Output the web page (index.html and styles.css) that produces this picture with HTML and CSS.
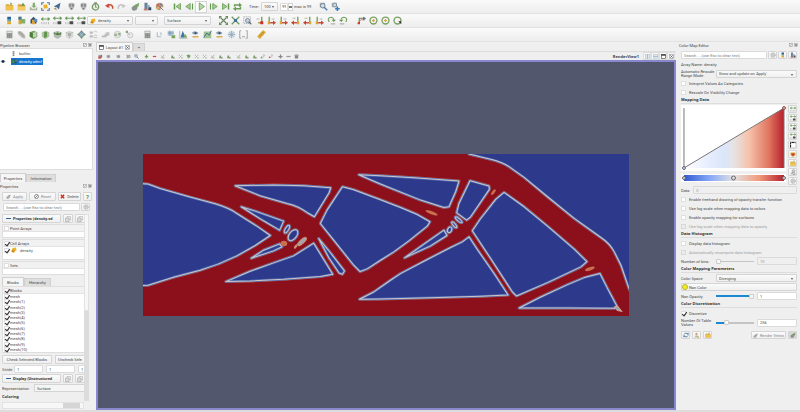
FILE: index.html
```html
<!DOCTYPE html>
<html lang="en">
<head>
<meta charset="utf-8">
<title>ParaView</title>
<link rel="stylesheet" href="styles.css">
</head>
<body>
<svg class="sprite" aria-hidden="true">
  <defs>
    <linearGradient id="cool-warm"><stop offset="0" stop-color="#3458cf"/><stop offset=".25" stop-color="#83a6f6"/><stop offset=".5" stop-color="#e3e2e2"/><stop offset=".75" stop-color="#f29a7c"/><stop offset="1" stop-color="#b5202b"/></linearGradient>
    <linearGradient id="opacity-fill"><stop offset="0" stop-color="#fff"/><stop offset=".2" stop-color="#eaf0fd"/><stop offset=".4" stop-color="#dbe6fb"/><stop offset=".5" stop-color="#e6e2e3"/><stop offset=".65" stop-color="#f6c2ab"/><stop offset=".85" stop-color="#e0755f"/><stop offset="1" stop-color="#b5202b"/></linearGradient>
  </defs>
  <symbol id="folder" viewBox="0 0 12 12"><path d="M1 3h4l1 1h5v7H1z" fill="#dba63a"/><path d="M1 5h10v6H1z" fill="#f0c24d"/><path d="M7 4V1h2v3" fill="#86a468"/></symbol>
  <symbol id="folder-up" viewBox="0 0 12 12"><path d="M1 3h4l1 1h5v7H1z" fill="#dba63a"/><path d="M1 6h10v5H1z" fill="#f2cc62"/><path d="M5 5l3-4 3 4z" fill="#6b9a58"/></symbol>
  <symbol id="save" viewBox="0 0 12 12"><path d="M5 1h3v4h2L6.500 8 3 5h2z" fill="#84ad70"/><path d="M1 7h2l1 2h5l1-2h1v4H1z" fill="#a7b69c"/></symbol>
  <symbol id="extract" viewBox="0 0 12 12"><path d="M3 4l5-1 1 5-5 1z" fill="#efb222"/><path d="M1 4V1h3M8 1h3v3M1 8v3h3M8 11h3V8" fill="none" stroke="#52779c" stroke-width="1.500"/></symbol>
  <symbol id="catalyst" viewBox="0 0 12 12"><path d="M1 6l9-5-2 9-3-3z" fill="#456b91"/><path d="M1 9l3-2 1 4z" fill="#b98b5e"/></symbol>
  <symbol id="server" viewBox="0 0 12 12"><path d="M2 2q4-2 8 0v4q-1 3-4 5-3-2-4-5z" fill="#b8b8b8"/><path d="M3 3h2v3H3zM7 3h2v3H7zM5 8h2v2H5z" fill="#767676"/></symbol>
  <symbol id="clock" viewBox="0 0 12 12"><circle cx="6" cy="6.500" r="4.200" fill="#e5eedf" stroke="#739663" stroke-width="1.700"/><path d="M6 3v4h2M4 1h4" fill="none" stroke="#64785a"/></symbol>
  <symbol id="undo" viewBox="0 0 12 12"><path d="M3 7q1-4 5-3 3 1 2 5" fill="none" stroke="#c94d35" stroke-width="2"/><path d="M0 5l5-3 1 6z" fill="#c94d35"/></symbol>
  <symbol id="redo" viewBox="0 0 12 12"><path d="M9 7Q8 3 4 4 1 5 2 9" fill="none" stroke="#c3c3c3" stroke-width="2"/><path d="M12 5L7 3v5z" fill="#c3c3c3"/></symbol>
  <symbol id="apply" viewBox="0 0 12 12"><path d="M1 7l4-3 4 2-1 4-4 2-3-2z" fill="#8a938b"/><path d="M5 4l6-3-1 5-3 1z" fill="#76a55f"/></symbol>
  <symbol id="apply-off" viewBox="0 0 12 12"><path d="M1 7l4-3 4 2-1 4-4 2-3-2z" fill="#aaa"/><path d="M5 4l6-3-1 5-3 1z" fill="#999"/></symbol>
  <symbol id="stack" viewBox="0 0 12 12"><path d="M2 1h4v10H2z" fill="#60809d"/><path d="M5 4h4v3H5z" fill="#9cadbd"/><path d="M7 7h4v4H7z" fill="#354b61"/><path d="M1 9h5v2H1z" fill="#d27966"/></symbol>
  <symbol id="palette" viewBox="0 0 12 12"><path d="M1 6q0-5 6-5 5 1 4 6H8l-1 4Q1 11 1 6z" fill="#ba947b"/><circle cx="4" cy="4" r="1.200" fill="#d65146"/><circle cx="8" cy="3.500" r="1.200" fill="#587eb5"/><circle cx="4" cy="8" r="1.200" fill="#e7c44d"/><path d="M6 6l5 5" stroke="#555"/></symbol>
  <symbol id="first" viewBox="0 0 12 12"><path d="M2 2v8" stroke="#629b4b" stroke-width="2"/><path d="M10 2v8L4 6z" fill="#a6c796" stroke="#629b4b"/></symbol>
  <symbol id="prev" viewBox="0 0 12 12"><path d="M7 2v8L1 6z" fill="#a6c796" stroke="#629b4b"/><path d="M10 2v8" stroke="#629b4b" stroke-width="1.500"/></symbol>
  <symbol id="play" viewBox="0 0 12 12"><path d="M3 1l7 5-7 5z" fill="#b8d4aa" stroke="#629b4b"/></symbol>
  <symbol id="next" viewBox="0 0 12 12"><path d="M5 2v8l6-4z" fill="#a6c796" stroke="#629b4b"/><path d="M2 2v8" stroke="#629b4b" stroke-width="1.500"/></symbol>
  <symbol id="last" viewBox="0 0 12 12"><path d="M10 2v8" stroke="#629b4b" stroke-width="2"/><path d="M2 2v8l6-4z" fill="#a6c796" stroke="#629b4b"/></symbol>
  <symbol id="loop" viewBox="0 0 12 12"><path d="M2 6V4h7M10 6v3H3" fill="none" stroke="#6a9d54" stroke-width="1.700"/><path d="M8 1l4 3-4 3zM4 6L0 9l4 3z" fill="#6a9d54"/></symbol>
  <symbol id="zoom" viewBox="0 0 12 12"><rect x="1" y="1" width="7" height="6" fill="#aab1b8"/><circle cx="5" cy="5" r="3" fill="#d3e0ea" stroke="#6d8090" stroke-width="1.300"/><path d="M7 7l4 4" stroke="#4c80b4" stroke-width="2"/></symbol>
  <symbol id="zoom-plus" viewBox="0 0 12 12"><rect x="1" y="1" width="7" height="6" fill="#aab1b8"/><circle cx="5" cy="4" r="2.500" fill="#d3e0ea" stroke="#6d8090"/><path d="M8.500 6v6M5.500 9h6" stroke="#397bb9" stroke-width="2"/></symbol>
  <symbol id="legend" viewBox="0 0 12 12"><path d="M3 1h5v3H3z" fill="#315f9c"/><path d="M3 4h5v3H3z" fill="#52a0b2"/><path d="M3 7h5v4H3z" fill="#e2a831"/></symbol>
  <symbol id="legend-green" viewBox="0 0 12 12"><path d="M2 1h4v10H2z" fill="#d9a838"/><path d="M2 1h4v4H2z" fill="#3577a8"/><path d="M5 4h6v6H5z" fill="#84ae6d"/></symbol>
  <symbol id="legend-edit" viewBox="0 0 12 12"><path d="M2 5l4-4 4 4v5H2z" fill="#38506b"/><path d="M4 5h4v6H4z" fill="#dda03b"/><path d="M7 4h4v4H7z" fill="#558bbd"/></symbol>
  <symbol id="rescale" viewBox="0 0 12 12"><path d="M0 4h12" stroke="#87a978" stroke-width="1.500"/><path d="M0 4l3-3v6zM12 4L9 1v6z" fill="#719c5f"/><path d="M1 8v3M4 8v3M7 8v3M10 8v3" stroke="#aaa"/></symbol>
  <symbol id="rescale-mark" viewBox="0 0 12 12"><path d="M0 3h12" stroke="#87a978" stroke-width="1.500"/><path d="M0 3l3-3v6zM12 3L9 0v6z" fill="#719c5f"/><path d="M1 8v3M4 8v3" stroke="#aaa"/><path d="M6 7h5v4H6z" fill="#484d48"/></symbol>
  <symbol id="fit" viewBox="0 0 12 12"><path d="M2 2l8 8M10 2l-8 8" stroke="#6b8065" stroke-width="1.500"/><path d="M0 0h4L0 4zM12 0v4L8 0zM0 12V8l4 4zM12 12H8l4-4z" fill="#659152"/></symbol>
  <symbol id="fit-data" viewBox="0 0 12 12"><path d="M1 1l10 10M11 1L1 11" stroke="#6f9b61" stroke-width="1.800"/><path d="M4 4h4v4H4z" fill="#3f7194"/></symbol>
  <symbol id="zoom-box" viewBox="0 0 12 12"><rect x="1" y="1" width="9" height="9" fill="none" stroke="#999" stroke-dasharray="1.500 1"/><circle cx="6" cy="6" r="2.800" fill="#c4d2df" stroke="#61788d"/><path d="M8 8l3 3" stroke="#48647d" stroke-width="1.500"/></symbol>
  <symbol id="axis-l" viewBox="0 0 12 12"><path d="M9 1v8" stroke="#83a86b" stroke-width="2"/><path d="M4 9h6" stroke="#c45842" stroke-width="2"/><path d="M4 6v6L0 9z" fill="#c7432f"/><path d="M8 7h3v4H8z" fill="#d7a834"/><path d="M2 3h4" stroke="#a9a66b"/></symbol>
  <symbol id="axis-x" viewBox="0 0 12 12"><path d="M9 1v7" stroke="#83a86b" stroke-width="2"/><path d="M4 9h5" stroke="#a9a66b" stroke-width="2"/><path d="M7 7h4v4H7z" fill="#cf2f20"/><path d="M2 4h4" stroke="#a5a5a5"/></symbol>
  <symbol id="axis-r" viewBox="0 0 12 12"><path d="M3 1v8" stroke="#83a86b" stroke-width="2"/><path d="M3 9h6" stroke="#c45842" stroke-width="2"/><path d="M8 6v6l4-3z" fill="#c7432f"/><path d="M1 7h3v4H1z" fill="#d7a834"/><path d="M6 4h4" stroke="#a5a5a5"/></symbol>
  <symbol id="rot-cw" viewBox="0 0 12 12"><path d="M3 8Q0 3 4 2q5-1 5 4" fill="none" stroke="#7ca568" stroke-width="1.600"/><path d="M6 5h6L9 8z" fill="#6b9856"/><path d="M5 10.500h6" stroke="#aaa" stroke-width="1.500"/></symbol>
  <symbol id="rot-ccw" viewBox="0 0 12 12"><path d="M9 8q3-5-1-6-5-1-5 3" fill="none" stroke="#7ca568" stroke-width="1.600"/><path d="M0 5h6L3 8z" fill="#6b9856"/><path d="M1 10.500h6" stroke="#aaa" stroke-width="1.500"/></symbol>
  <symbol id="axes" viewBox="0 0 12 12"><path d="M3 10V3h8" fill="none" stroke="#668c55" stroke-width="1.500"/><path d="M1 10l4-5h6" fill="none" stroke="#b86855"/><path d="M1 8h3v3H1z" fill="#c7432f"/><path d="M8 1l4 2-4 3z" fill="#4f789c"/></symbol>
  <symbol id="center" viewBox="0 0 12 12"><circle cx="6" cy="6" r="4.600" fill="none" stroke="#7ba267" stroke-width="1.800"/><path d="M4 6h4M6 4v4" stroke="#dba538" stroke-width="1.600"/></symbol>
  <symbol id="pick" viewBox="0 0 12 12"><circle cx="6" cy="6" r="4.600" fill="none" stroke="#7ba267" stroke-width="1.800"/><path d="M7 7h4v4z" fill="#333"/></symbol>
  <symbol id="calc" viewBox="0 0 12 12"><rect x="2" y="1" width="8" height="10" fill="#a5a9a5"/><path d="M3 2h6v2H3z" fill="#dfe5df"/><path d="M3 5.500h6M3 7.500h6M3 9.500h6" stroke="#6f736f" stroke-dasharray="1.500 .700"/></symbol>
  <symbol id="contour" viewBox="0 0 12 12"><path d="M1 2q4-2 7 2 4 3 3 7-4 1-7-3-4-3-3-6z" fill="#b8bab5"/><path d="M3 3q4 1 6 6" fill="none" stroke="#8a8f86"/></symbol>
  <symbol id="cube" viewBox="0 0 12 12"><path d="M1 3l5-2 5 2v6l-5 3-5-3z" fill="#72a05d"/><path d="M5 4l5-2v7l-5 1z" fill="#bfd3b5"/><path d="M1 3l4 1v7L1 9z" fill="#4d7d3b"/></symbol>
  <symbol id="slice" viewBox="0 0 12 12"><path d="M1 3l5-2 5 2v6l-5 3-5-3z" fill="#b3c3ab"/><path d="M4 3l4-1v7l-4 2z" fill="#62964d"/></symbol>
  <symbol id="threshold" viewBox="0 0 12 12"><path d="M1 3l5-2 5 2v6l-5 3-5-3z" fill="#b3bbb0"/><path d="M1 3l3 2 2-2 2 2 3-2v3L6 7 1 5z" fill="#4f7e3e"/></symbol>
  <symbol id="subset" viewBox="0 0 12 12"><path d="M1 3l5-2 5 2v6l-5 3-5-3z" fill="#d6d8d6"/><path d="M4 4h4v4H4z" fill="#a8ada8"/><path d="M1 3l5 2 5-2M6 5v6" fill="none" stroke="#b4b4b4"/></symbol>
  <symbol id="glyph" viewBox="0 0 12 12"><path d="M6 0l2 3H4zM6 12L4 9h4zM0 6l3-2v4zM12 6L9 8V4z" fill="#739063"/><circle cx="6" cy="6" r="3.300" fill="#91adba" stroke="#668090"/></symbol>
  <symbol id="stream" viewBox="0 0 12 12"><path d="M1 2h4v3H1zM1 7h4v3H1z" fill="#bbb"/><path d="M6 3q3-3 5 0M6 8q3-3 5 0M6 10h5" fill="none" stroke="#b5bab5"/></symbol>
  <symbol id="warp" viewBox="0 0 12 12"><path d="M1 8q4 1 4-3 1-3 6-2v5Q7 7 7 10H1z" fill="#c8cbc7"/><path d="M1 8h5l5-4" fill="none" stroke="#a8a8a8"/></symbol>
  <symbol id="group" viewBox="0 0 12 12"><circle cx="6" cy="6" r="4.500" fill="#dfe1de" stroke="#c5c8c4"/><path d="M2 5h3v3H2zM7 4h3v3H7z" fill="#93ae89"/></symbol>
  <symbol id="level" viewBox="0 0 12 12"><circle cx="7" cy="7" r="3.500" fill="#ececec" stroke="#bbb"/><path d="M1 1h3v3H1z" fill="#87a37c"/><path d="M3 4l4 3" stroke="#aaa"/></symbol>
  <symbol id="probe" viewBox="0 0 12 12"><path d="M3 3v6h5M8 3v4" fill="none" stroke="#adbecb" stroke-width="1.500"/></symbol>
  <symbol id="table" viewBox="0 0 12 12"><path d="M1 1h8v7H1z" fill="#c4d7e4"/><path d="M1 3h8M1 5h8M4 1v7" stroke="#7193a9"/><path d="M6 7h5v4H6z" fill="#77a65c"/></symbol>
  <symbol id="histogram" viewBox="0 0 12 12"><path d="M1 1v10h10" fill="none" stroke="#9aa"/><path d="M2 10l3-9 2 5v4z" fill="#3f73ad"/><path d="M6 10l2-5 3 5z" fill="#74a24f"/></symbol>
  <symbol id="eye-plot" viewBox="0 0 12 12"><path d="M1 4q4-5 9 0-4 4-9 0z" fill="#859eb1"/><circle cx="6" cy="4" r="1.500" fill="#36546e"/><path d="M2 9h8" stroke="#d8ac56" stroke-width="2"/></symbol>
  <symbol id="three-d" viewBox="0 0 12 12"><path d="M1 3h4v6H1M2 6h3M7 3v6h2q2-3 0-6z" fill="none" stroke="#777" stroke-width="1.500"/></symbol>
  <symbol id="over-line" viewBox="0 0 12 12"><path d="M1 2h10v9H1z" fill="#a2c292"/><path d="M1 10l4-6 3 3 3-6" fill="none" stroke="#416f93" stroke-width="1.300"/></symbol>
  <symbol id="star" viewBox="0 0 12 12"><circle cx="6" cy="6" r="5" fill="#d4dee6"/><path d="M6 1v10M1 6h10M3 3l6 6M9 3L3 9" stroke="#8fa8bc"/></symbol>
  <symbol id="brackets" viewBox="0 0 12 12"><path d="M3 1H1v10h2M9 1h2v10H9M4 9h4" fill="none" stroke="#8e8e8e"/></symbol>
  <symbol id="ruler" viewBox="0 0 12 12"><path d="M8 0l4 3-8 9-4-3z" fill="#e1ae3a"/><path d="M3 7l2 1M5 5l2 1M7 3l2 1" stroke="#8b6a25"/></symbol>
  <symbol id="camera-x" viewBox="0 0 12 12"><path d="M1 2h9v8H1z" fill="#a6a6a6"/><path d="M1 6h6v5H1z" fill="#c44d40"/><circle cx="8" cy="5" r="2" fill="#666"/></symbol>
  <symbol id="camera" viewBox="0 0 12 12"><path d="M1 2h9v8H1z" fill="#c6c6c6"/><circle cx="6" cy="6" r="3" fill="#8b9298"/></symbol>
  <symbol id="plus-g" viewBox="0 0 12 12"><path d="M6 2v8M2 6h8" stroke="#79a163" stroke-width="3"/></symbol>
  <symbol id="minus-r" viewBox="0 0 12 12"><path d="M2 6h8" stroke="#c6534c" stroke-width="3"/></symbol>
  <symbol id="sel-a" viewBox="0 0 12 12"><path d="M2 10l3-8 5 8z" fill="#78a065"/><path d="M7 7h4v4H7z" fill="#999"/></symbol>
  <symbol id="sel-b" viewBox="0 0 12 12"><path d="M2 2h2v2H2zM8 2h2v2H8zM2 8h2v2H2zM8 8h3v3H8zM5 5h2v2H5z" fill="#91a48a"/></symbol>
  <symbol id="sel-c" viewBox="0 0 12 12"><path d="M1 3l6-2 4 3-2 5H6v2H4V8z" fill="#779c67"/></symbol>
  <symbol id="sel-d" viewBox="0 0 12 12"><path d="M3 4l3 3 4-5M2 9h5" stroke="#8ca380" stroke-width="1.700" fill="none"/><circle cx="9" cy="9" r="1.500" fill="#bb755f"/></symbol>
  <symbol id="query-g" viewBox="0 0 12 12"><path d="M7 3q4-3 4 1L9 6v2" stroke="#999" stroke-width="1.500" fill="none"/><path d="M1 10l3-5 3 5z" fill="#78a065"/></symbol>
  <symbol id="query-r" viewBox="0 0 12 12"><path d="M7 3q4-3 4 1L9 6v2" stroke="#999" stroke-width="1.500" fill="none"/><circle cx="4" cy="8" r="2" fill="#cc3c2e"/></symbol>
  <symbol id="plus" viewBox="0 0 12 12"><path d="M6 1v10M1 6h10" stroke="#888" stroke-width="3"/></symbol>
  <symbol id="minus" viewBox="0 0 12 12"><path d="M1 6h10" stroke="#999" stroke-width="3"/></symbol>
  <symbol id="trash" viewBox="0 0 12 12"><path d="M1 2h10v2H1zM2 5h8v6H2z" fill="#888"/><path d="M4 1h4" stroke="#888"/></symbol>
  <symbol id="float" viewBox="0 0 12 12"><rect x="1" y="1" width="10" height="10" fill="none" stroke="#8d8d8d" stroke-width="1.500"/><path d="M3 9l6-6" stroke="#8d8d8d" stroke-width="1.500"/></symbol>
  <symbol id="close" viewBox="0 0 12 12"><rect x="1" y="1" width="10" height="10" fill="none" stroke="#999" stroke-width="1.500"/><path d="M3 3l6 6M9 3l-6 6" stroke="#555" stroke-width="1.800"/></symbol>
  <symbol id="split-h" viewBox="0 0 12 12"><rect x="1" y="1" width="10" height="10" fill="#dce8f2" stroke="#9cb4ca"/><path d="M6 1v10" stroke="#86a3bd" stroke-width="1.500"/></symbol>
  <symbol id="split-v" viewBox="0 0 12 12"><rect x="1" y="1" width="10" height="10" fill="#dce8f2" stroke="#9cb4ca"/><path d="M1 6h10" stroke="#86a3bd" stroke-width="1.500"/></symbol>
  <symbol id="window" viewBox="0 0 12 12"><rect x="1" y="1" width="10" height="10" fill="#fff" stroke="#444" stroke-width="1.500"/><path d="M1 1h10v3H1z" fill="#333"/></symbol>
  <symbol id="builtin" viewBox="0 0 12 12"><path d="M4 0h4v12H4z" fill="#858585"/><path d="M4 3h4M4 8h4" stroke="#ddd" stroke-width="1.500"/></symbol>
  <symbol id="dataset" viewBox="0 0 12 12"><path d="M1 1h10v10H1z" fill="#28546d"/><path d="M1 2l5 2v7L1 9z" fill="#3d953e"/><path d="M6 5l5-3v4z" fill="#b88442"/></symbol>
  <symbol id="eye" viewBox="0 0 12 12"><path d="M0 6q6-7 12 0-6 6-12 0z" fill="#8ca0b8"/><circle cx="6" cy="6" r="3" fill="#16263e"/></symbol>
  <symbol id="cell" viewBox="0 0 12 12"><path d="M3 2l7-1 1 6-3 1-1 3-6-1 1-4z" fill="#eeb22b"/><path d="M2 6l5 1-1 4-5-1z" fill="#c98e1d"/></symbol>
  <symbol id="reset" viewBox="0 0 12 12"><circle cx="6" cy="6" r="4.800" fill="none" stroke="#666" stroke-width="1.700"/><path d="M3 9l6-6" stroke="#666" stroke-width="1.700"/></symbol>
  <symbol id="delete" viewBox="0 0 12 12"><path d="M2 2l8 8M10 2l-8 8" stroke="#d12e20" stroke-width="3.500"/></symbol>
  <symbol id="gear" viewBox="0 0 12 12"><circle cx="6" cy="6" r="4.500" fill="#ddd" stroke="#aaa" stroke-width="2" stroke-dasharray="2 1"/><circle cx="6" cy="6" r="2" fill="#f6f6f6" stroke="#999"/></symbol>
  <symbol id="copy" viewBox="0 0 12 12"><path d="M4 1h7v7H4z" fill="#eee" stroke="#a4a4a4"/><path d="M1 4h7v7H1z" fill="#ddd" stroke="#999"/></symbol>
  <symbol id="corners" viewBox="0 0 12 12"><path d="M2 2h9v9H2z" fill="#fff" stroke="#aaa" stroke-dasharray="2 1"/><path d="M1 11V1h10" fill="none" stroke="#222" stroke-width="2" stroke-dasharray="5 1"/></symbol>
  <symbol id="preset" viewBox="0 0 12 12"><path d="M1 3h10v5l-5 4-5-4z" fill="#dda238"/><path d="M3 5h6v2L6 10 3 7z" fill="#c13529"/></symbol>
  <symbol id="manual" viewBox="0 0 12 12"><circle cx="7" cy="4" r="3" fill="#c9c9c9" stroke="#999"/><path d="M6 6l-4 5M2 8h8v3H5" stroke="#999" stroke-width="1.500" fill="none"/></symbol>
  <symbol id="refresh" viewBox="0 0 12 12"><path d="M2 5q2-5 7-2M10 7q-2 5-7 2" fill="none" stroke="#43749f" stroke-width="1.700"/><path d="M7 4l4-3v5zM5 8l-4 3V6z" fill="#43749f"/></symbol>
  <symbol id="user" viewBox="0 0 12 12"><circle cx="5" cy="4" r="2.500" fill="#d9a576"/><path d="M1 11q2-6 5-4l4 4z" fill="#b7c3a9"/><path d="M6 8l4 3" stroke="#d29143" stroke-width="2"/></symbol>
</svg>

<header class="toolbars">
  <div class="toolbar" role="toolbar" aria-label="Main controls">
    <button aria-label="Open"><svg><use href="#folder"/></svg></button><button aria-label="Load state"><svg><use href="#folder-up"/></svg></button><button aria-label="Save data"><svg><use href="#save"/></svg></button><button aria-label="Extracts"><svg><use href="#extract"/></svg></button><button aria-label="Catalyst"><svg><use href="#catalyst"/></svg></button><i class="gap-s"></i>
    <button aria-label="Connect"><svg><use href="#server"/></svg></button><button aria-label="Disconnect"><svg><use href="#server"/></svg></button><button aria-label="Timer"><svg><use href="#clock"/></svg></button><i class="gap-s"></i>
    <button aria-label="Undo"><svg><use href="#undo"/></svg></button><button aria-label="Redo"><svg><use href="#redo"/></svg></button><i class="gap-s"></i>
    <button aria-label="Auto apply"><svg><use href="#apply"/></svg></button><button aria-label="Find data"><svg><use href="#stack"/></svg></button><button aria-label="Palette"><svg><use href="#palette"/></svg></button><i class="gap-l"></i>
    <button aria-label="First frame"><svg><use href="#first"/></svg></button><button aria-label="Previous frame"><svg><use href="#prev"/></svg></button><button class="raised" aria-label="Play"><svg><use href="#play"/></svg></button><button aria-label="Next frame"><svg><use href="#next"/></svg></button><button aria-label="Last frame"><svg><use href="#last"/></svg></button><button aria-label="Loop"><svg><use href="#loop"/></svg></button><i class="gap-l"></i>
    <label class="time" for="time">Time:</label>
    <span class="combo time-value"><select id="time"><option>100</option></select></span>
    <input class="frame" type="text" aria-label="Frame" value="99"><span class="spin" aria-hidden="true"></span>
    <span class="max">max is 99</span><i class="gap-l"></i>
    <button aria-label="Zoom camera"><svg><use href="#zoom"/></svg></button><button aria-label="Add camera"><svg><use href="#zoom-plus"/></svg></button>
  </div>
  <div class="toolbar" role="toolbar" aria-label="Coloring and camera">
    <button aria-label="Legend"><svg><use href="#legend"/></svg></button><button aria-label="Separate map"><svg><use href="#legend-green"/></svg></button><button aria-label="Edit map"><svg><use href="#legend-edit"/></svg></button><button aria-label="Rescale to data"><svg><use href="#rescale"/></svg></button><button aria-label="Rescale custom"><svg><use href="#rescale-mark"/></svg></button><button aria-label="Rescale over time"><svg><use href="#rescale-mark"/></svg></button><button aria-label="Rescale to visible"><svg><use href="#rescale-mark"/></svg></button>
    <span class="combo array"><svg><use href="#cell"/></svg><select aria-label="Color array"><option>density</option></select></span>
    <span class="combo component"><select aria-label="Component"><option></option></select></span>
    <span class="combo surface"><select aria-label="Representation type"><option>Surface</option></select></span><i class="gap-l"></i>
    <button aria-label="Reset camera"><svg><use href="#fit"/></svg></button><button aria-label="Zoom to data"><svg><use href="#fit-data"/></svg></button><button aria-label="Zoom to box"><svg><use href="#zoom-box"/></svg></button><button aria-label="+X"><svg><use href="#axis-x"/></svg></button><button aria-label="-X"><svg><use href="#axis-r"/></svg></button><button aria-label="+Y"><svg><use href="#axis-r"/></svg></button><button aria-label="-Y"><svg><use href="#axis-l"/></svg></button><button aria-label="+Z"><svg><use href="#axis-l"/></svg></button><button aria-label="-Z"><svg><use href="#axis-r"/></svg></button><button aria-label="Rotate 90"><svg><use href="#rot-cw"/></svg></button><button aria-label="Rotate -90"><svg><use href="#rot-ccw"/></svg></button><i class="gap-l"></i>
    <button aria-label="Orientation axes"><svg><use href="#axes"/></svg></button><button aria-label="Show center"><svg><use href="#center"/></svg></button><button aria-label="Reset center"><svg><use href="#center"/></svg></button><button aria-label="Pick center"><svg><use href="#pick"/></svg></button>
  </div>
  <div class="toolbar" role="toolbar" aria-label="Filters">
    <button aria-label="Calculator"><svg><use href="#calc"/></svg></button><button aria-label="Contour"><svg><use href="#contour"/></svg></button><button aria-label="Clip"><svg><use href="#cube"/></svg></button><button aria-label="Slice"><svg><use href="#slice"/></svg></button><button aria-label="Threshold"><svg><use href="#threshold"/></svg></button><button aria-label="Extract subset"><svg><use href="#subset"/></svg></button><button aria-label="Glyph"><svg><use href="#glyph"/></svg></button><button aria-label="Stream tracer"><svg><use href="#stream"/></svg></button><button aria-label="Warp"><svg><use href="#warp"/></svg></button><button aria-label="Group"><svg><use href="#group"/></svg></button><button aria-label="Extract level"><svg><use href="#level"/></svg></button><i class="gap-l"></i>
    <button aria-label="Python calculator"><svg><use href="#calc"/></svg></button><button aria-label="Probe"><svg><use href="#probe"/></svg></button><button aria-label="Selection table"><svg><use href="#table"/></svg></button><button aria-label="Histogram"><svg><use href="#histogram"/></svg></button><button aria-label="Plot selection"><svg><use href="#eye-plot"/></svg></button><button aria-label="Plot over line"><svg><use href="#over-line"/></svg></button><button aria-label="Plot over time"><svg><use href="#eye-plot"/></svg></button><button aria-label="Temporal"><svg><use href="#star"/></svg></button><button aria-label="Programmable"><svg><use href="#brackets"/></svg></button><i class="gap-l"></i>
    <button aria-label="Ruler"><svg><use href="#ruler"/></svg></button>
  </div>
</header>

<main class="workspace">
  <aside class="left">
    <section class="pipeline">
      <h2 class="dock-title">Pipeline Browser<span><svg><use href="#float"/></svg><svg><use href="#close"/></svg></span></h2>
      <ul class="tree">
        <li><span class="eye"></span><svg><use href="#builtin"/></svg><span>builtin:</span></li>
        <li><svg class="eye"><use href="#eye"/></svg><b class="selected"><svg><use href="#dataset"/></svg>density.xdmf</b></li>
      </ul>
    </section>
    <nav class="tabs dock-tabs"><button class="active">Properties</button><button>Information</button></nav>
    <section class="properties">
      <h2 class="dock-title">Properties<span><svg><use href="#float"/></svg><svg><use href="#close"/></svg></span></h2>
      <div class="actions"><button class="btn muted"><svg><use href="#apply-off"/></svg>Apply</button><button class="btn muted"><svg><use href="#reset"/></svg>Reset</button><button class="btn"><svg><use href="#delete"/></svg>Delete</button><button class="btn help">?</button></div>
      <div class="search"><input type="text" aria-label="Search properties" placeholder="Search ... (use Esc to clear text)"><button class="btn sq" aria-label="Advanced"><svg><use href="#gear"/></svg></button></div>
      <div class="scroll">
        <div class="panel">
          <div class="group-head"><button class="btn"><i></i><span>Properties (density.xd</span></button><button class="btn sq" aria-label="Copy"><svg><use href="#copy"/></svg></button><button class="btn sq" aria-label="Paste"><svg><use href="#copy"/></svg></button></div>
          <div class="arrays short"><label class="head"><input type="checkbox">Point Arrays</label></div>
          <div class="arrays tall"><label class="head"><input type="checkbox" checked>Cell Arrays</label><label class="item"><input type="checkbox" checked><svg><use href="#cell"/></svg>density</label></div>
          <div class="arrays short"><label class="head"><input type="checkbox">Sets</label></div>
          <nav class="tabs block-tabs"><button class="active">Blocks</button><button>Hierarchy</button></nav>
          <div class="arrays blocks"><label class="head"><input type="checkbox" checked>Blocks</label>
            <label><input type="checkbox" checked>mesh</label><label><input type="checkbox" checked>mesh(1)</label><label><input type="checkbox" checked>mesh(2)</label><label><input type="checkbox" checked>mesh(3)</label><label><input type="checkbox" checked>mesh(4)</label><label><input type="checkbox" checked>mesh(5)</label><label><input type="checkbox" checked>mesh(6)</label><label><input type="checkbox" checked>mesh(7)</label><label><input type="checkbox" checked>mesh(8)</label><label><input type="checkbox" checked>mesh(9)</label><label><input type="checkbox" checked>mesh(10)</label>
          </div>
          <div class="wide"><button class="btn check-btn">Check Selected Blocks</button><button class="btn uncheck-btn">Uncheck Sele</button></div>
          <div class="wide stride"><label for="stride">Stride</label><input id="stride" type="text" value="1"><input type="text" aria-label="Stride 2" value="1"><input type="text" aria-label="Stride 3" value="1"></div>
          <div class="group-head"><button class="btn"><i></i><span>Display (Unstructured</span></button><button class="btn sq" aria-label="Copy display"><svg><use href="#copy"/></svg></button><button class="btn sq" aria-label="Paste display"><svg><use href="#copy"/></svg></button></div>
          <div class="wide repr"><label for="repr">Representation</label><select id="repr"><option>Surface</option></select></div>
          <h3>Coloring</h3>
        </div>
        <div class="vbar"><i></i></div>
      </div>
      <div class="hbar"><i></i></div>
    </section>
  </aside>

  <section class="center">
    <div class="tabs layout-tabs"><button class="active"><svg><use href="#window"/></svg>Layout #1<svg><use href="#close"/></svg></button><button>+</button></div>
    <div class="viewbar">
      <button aria-label="Undo camera"><svg><use href="#camera-x"/></svg></button><button aria-label="Redo camera"><svg><use href="#camera"/></svg></button><i></i><button aria-label="Capture"><svg><use href="#camera"/></svg></button><i></i><button aria-label="3D"><svg><use href="#three-d"/></svg></button><button aria-label="Adjust camera"><svg><use href="#zoom"/></svg></button><i></i><button aria-label="Add selection"><svg><use href="#plus-g"/></svg></button><button aria-label="Subtract selection"><svg><use href="#minus-r"/></svg></button><button aria-label="Toggle selection"><svg><use href="#sel-d"/></svg></button><i></i><button aria-label="Select cells"><svg><use href="#sel-a"/></svg></button><button aria-label="Select points"><svg><use href="#sel-b"/></svg></button><button aria-label="Select through"><svg><use href="#sel-c"/></svg></button><button aria-label="Points through"><svg><use href="#sel-b"/></svg></button><button aria-label="Polygon cells"><svg><use href="#sel-b"/></svg></button><button aria-label="Polygon points"><svg><use href="#sel-d"/></svg></button><button aria-label="Select block"><svg><use href="#sel-a"/></svg></button><button aria-label="Interactive cells"><svg><use href="#sel-a"/></svg></button><i></i><button aria-label="Interactive points"><svg><use href="#sel-d"/></svg></button><button aria-label="Hover points"><svg><use href="#sel-a"/></svg></button><button aria-label="Hover cells"><svg><use href="#sel-a"/></svg></button><button aria-label="Query cell"><svg><use href="#query-g"/></svg></button><button aria-label="Query point"><svg><use href="#query-r"/></svg></button><i></i><button aria-label="Grow"><svg><use href="#plus"/></svg></button><button aria-label="Shrink"><svg><use href="#minus"/></svg></button><button aria-label="Clear"><svg><use href="#trash"/></svg></button>
      <strong>RenderView1</strong>
      <button class="raised" aria-label="Split horizontally"><svg><use href="#split-h"/></svg></button><button class="raised" aria-label="Split vertically"><svg><use href="#split-v"/></svg></button><button class="raised" aria-label="Maximize"><svg><use href="#window"/></svg></button><button class="raised" aria-label="Close view"><svg><use href="#close"/></svg></button>
    </div>
    <div class="viewport">
      <svg class="render" viewBox="9 12 1455 485" role="img" aria-label="Density field">
        <defs>
          <g id="voids" stroke-linejoin="round">
            <path d="M0 101L24 102 60 115 150 141 225 161Q265 173 285 187L350 228 390 256 345 286 290 317Q235 344 180 360L100 381 24 405 0 406z"/>
            <path d="M285 107L400 105 490 107 571 113 566 128 522 200 500 187Q475 168 440 160L360 137z"/>
            <path d="M303 170L345 183 430 213 418 240 370 212z"/>
            <path d="M333 324L370 300 418 281 425 290 400 302z"/>
            <path d="M257 394L330 363 400 338 460 317 520 279 577 372 540 379 430 387 330 392z"/>
            <path d="M535 265L572 310 612 362 606 372 596 368 565 322z"/>
            <path d="M606 110L640 119 720 149 780 172 830 193 868 215 860 228 805 272 760 305 720 330 680 356 659 364 640 345 580 270 540 220 560 180z"/>
            <path d="M655 74L720 77 820 83 955 93 945 125 925 170 910 172 840 150 720 102z"/>
            <path d="M988 92L1045 108 1046 118 990 200 978 210 948 188 955 160z"/>
            <path d="M1090 127L1150 170 1220 228 1300 297 1338 334 1320 350 1220 397 1127 437 1115 425 1050 325 995 242 1020 205 1065 148z"/>
            <path d="M657 447L700 425 750 390 780 370 850 333 930 292 965 275 985 260 1010 298 1060 370 1102 434 1020 438 870 442 720 446z"/>
            <path d="M792 323L850 282 910 240 919 256 870 287z"/>
            <path d="M1135 473L1200 440 1280 403 1330 382 1377 370 1400 415 1428 468 1420 474 1280 473z"/>
            <path d="M985 8V12L1050 28Q1085 37 1105 50L1150 82 1220 140 1300 205 1380 262Q1407 280 1420 305L1440 345 1463 412 1475 440V8z"/>
          </g>
          <g id="slots">
            <ellipse cx="440" cy="237" rx="5" ry="13" transform="rotate(30 440 237)"/>
            <ellipse cx="458" cy="255" rx="11" ry="19" transform="rotate(38 458 255)"/>
            <ellipse cx="927" cy="239" rx="6" ry="9" transform="rotate(25 927 239)"/>
            <ellipse cx="941" cy="224" rx="4" ry="11" transform="rotate(-40 941 224)"/>
            <ellipse cx="954" cy="209" rx="4" ry="13" transform="rotate(-50 954 209)"/>
          </g>
        </defs>
        <rect x="9" y="12" width="1455" height="485" fill="#8b101b"/>
        <g fill="none" stroke="#b9583f" stroke-width="9"><use href="#voids"/><use href="#slots"/></g>
        <g fill="#2d398b" stroke="#4f6bb8" stroke-width="7"><use href="#voids"/><use href="#slots"/></g>
        <g fill="none" stroke="#cfc6c2" stroke-width="3"><use href="#voids"/><use href="#slots"/></g>
        <g fill="#a3a4b2" stroke="#d08f72" stroke-width="3"><ellipse cx="485" cy="274" rx="6" ry="17" transform="rotate(48 485 274)"/><ellipse cx="466" cy="289" rx="2" ry="6" transform="rotate(35 466 289)"/></g>
        <g fill="#c8704f"><ellipse cx="431" cy="280" rx="10" ry="8"/><ellipse cx="873" cy="188" rx="19" ry="5" transform="rotate(20 873 188)"/><ellipse cx="1058" cy="126" rx="4" ry="10" transform="rotate(38 1058 126)"/><ellipse cx="1347" cy="356" rx="15" ry="5" transform="rotate(-18 1347 356)"/></g>
        <path d="M1420 470l10-2 12 15-12-2z" fill="#8ba3c3" stroke="#d6aa92" stroke-width="3"/>
      </svg>
    </div>
  </section>

  <aside class="right">
    <h2 class="dock-title">Color Map Editor<span><svg><use href="#float"/></svg><svg><use href="#close"/></svg></span></h2>
    <div class="editor">
      <div class="row find"><input type="text" aria-label="Search color map" placeholder="Search ... (use Esc to clear text)"><button class="btn sq" aria-label="Advanced"><svg><use href="#gear"/></svg></button><button class="btn sq" aria-label="Default map"><svg><use href="#legend"/></svg></button><button class="btn sq" aria-label="Save default"><svg><use href="#stack"/></svg></button></div>
      <div class="row">Array Name: density</div>
      <div class="row field two"><label for="rescale-mode">Automatic Rescale<br>Range Mode</label><span class="combo"><select id="rescale-mode"><option>Grow and update on 'Apply'</option></select></span></div>
      <label class="row"><input type="checkbox">Interpret Values As Categories</label>
      <label class="row"><input type="checkbox">Rescale On Visibility Change</label>
      <h3>Mapping Data</h3>
      <div class="mapping">
        <div class="plots">
          <svg class="curve" viewBox="0 0 106 66" preserveAspectRatio="none"><path d="M3 63L104 3v60z" fill="url(#opacity-fill)"/><path d="M3 3v60L104 3v60" fill="none" stroke="#777"/><circle cx="3" cy="63" r="1.500" fill="#c8d8f0" stroke="#667"/><circle cx="104" cy="3" r="1.500" fill="#e9a69d" stroke="#855"/></svg>
          <svg class="ramp" viewBox="0 0 106 8" preserveAspectRatio="none"><path d="M3 1h101v6H3z" fill="url(#cool-warm)"/><g fill="#ddd" stroke="#666"><circle cx="3" cy="4" r="1.500"/><circle cx="53" cy="4" r="2"/><circle cx="104" cy="4" r="1.500"/></g></svg>
        </div>
        <div class="side"><button class="btn sq" aria-label="Rescale data"><svg><use href="#rescale"/></svg></button><button class="btn sq" aria-label="Rescale custom range"><svg><use href="#rescale-mark"/></svg></button><button class="btn sq" aria-label="Rescale time range"><svg><use href="#rescale-mark"/></svg></button><button class="btn sq" aria-label="Rescale visible range"><svg><use href="#rescale-mark"/></svg></button><button class="btn sq" aria-label="Invert"><svg><use href="#corners"/></svg></button><button class="btn sq" aria-label="Choose preset"><svg><use href="#preset"/></svg></button><button class="btn sq" aria-label="Save preset"><svg><use href="#folder"/></svg></button><button class="btn sq" aria-label="Manual edit"><svg><use href="#manual"/></svg></button><button class="btn sq" aria-label="Settings"><svg><use href="#gear"/></svg></button></div>
      </div>
      <div class="row data"><label for="data">Data:</label><input id="data" type="text" value="0" disabled></div>
      <label class="row"><input type="checkbox">Enable freehand drawing of opacity transfer function</label>
      <label class="row"><input type="checkbox">Use log scale when mapping data to colors</label>
      <label class="row"><input type="checkbox">Enable opacity mapping for surfaces</label>
      <label class="row off"><input type="checkbox" disabled>Use log scale when mapping data to opacity</label>
      <h3>Data Histogram</h3>
      <label class="row"><input type="checkbox">Display data histogram</label>
      <label class="row off"><input type="checkbox" disabled>Automatically recompute data histogram</label>
      <div class="row field"><label for="bins">Number of bins:</label><input id="bins" class="low" type="range" value="0" disabled><input type="text" aria-label="Bins" value="10" disabled></div>
      <h3>Color Mapping Parameters</h3>
      <div class="row field"><label for="space">Color Space</label><span class="combo"><select id="space"><option>Diverging</option></select></span></div>
      <button class="btn nan"><i></i>Nan Color</button>
      <div class="row field"><label for="nan">Nan Opacity</label><input id="nan" class="full" type="range" value="100"><input type="text" aria-label="Nan opacity value" value="1"></div>
      <h3>Color Discretization</h3>
      <label class="row"><input type="checkbox" checked>Discretize</label>
      <div class="row field two"><label for="table">Number Of Table<br>Values</label><input id="table" class="part" type="range" value="25"><input type="text" aria-label="Table values" value="256"></div>
      <div class="footer"><button class="btn sq" aria-label="Refresh"><svg><use href="#refresh"/></svg></button><button class="btn sq" aria-label="Restore"><svg><use href="#user"/></svg></button><button class="btn sq" aria-label="Save"><svg><use href="#folder"/></svg></button><button class="btn views muted"><svg><use href="#apply-off"/></svg>Render Views</button><button class="btn sq pressed" aria-label="Auto render"><svg><use href="#apply"/></svg></button></div>
    </div>
  </aside>
</main>
</body>
</html>
```
FILE: styles.css
```css
* { box-sizing: border-box; }
body {
  margin: 0; height: 100vh; display: flex; flex-direction: column; overflow: hidden;
  background: #efefef; color: #484848; font: 4px/5px Roboto, "Noto Sans", sans-serif;
}
.sprite { position: absolute; width: 0; height: 0; }
svg { flex: none; display: block; }
button, input, select { font: inherit; color: inherit; margin: 0; padding: 0; min-width: 0; border: 0; background: none; appearance: none; }
button { display: flex; align-items: center; justify-content: center; white-space: nowrap; }
select { width: 100%; height: 100%; }
h2, h3, ul { margin: 0; padding: 0; font-size: 4px; }
h3, strong { font-family: "Noto Sans", sans-serif; }
label { white-space: nowrap; }

input[type="text"] { height: 8px; padding: 0 2px; background: #fff; border: 1px solid #dadada; border-radius: 1px; }
input[type="text"]:disabled { background: #efefef; color: #999; }
input::placeholder { color: #7b7b7b; opacity: 1; }
input[type="checkbox"] { flex: none; width: 5px; height: 5px; background: #fff; border: 1px solid #e0e0e0; display: block; position: relative; }
input[type="checkbox"]:disabled { background: #ececec; border-color: #d8d8d8; }
input[type="checkbox"]:checked::after { content: ""; position: absolute; left: 1px; top: -1px; width: 2px; height: 4px; border: solid #333; border-width: 0 1px 1px 0; transform: rotate(38deg); }
input[type="range"] { height: 5px; background: linear-gradient(#c4c4c4, #c4c4c4) center / 100% 1px no-repeat; }
input[type="range"]::-webkit-slider-thumb { appearance: none; width: 5px; height: 5px; background: #f8f8f8; border: 1px solid #ccc; border-radius: 1px; }
input.low { background-image: linear-gradient(90deg, #8db8df 5%, #c4c4c4 5%); }
input.full { background-image: linear-gradient(#1d86d2, #1d86d2); background-size: 100% 2px; }
input.part { background-image: linear-gradient(90deg, #1d86d2 25%, #c4c4c4 25%); background-size: 100% 2px; }

.btn { height: 9px; gap: 2px; background: linear-gradient(#fafafa, #f0f0f0); border: 1px solid #d5d5d5; border-radius: 1px; }
.btn svg { width: 5px; height: 5px; }
.btn.sq { width: 9px; height: 8px; flex: none; }
.btn.sq svg { width: 6px; height: 6px; }
.muted { color: #8a8a8a; }
.combo { position: relative; display: flex; align-items: center; height: 9px; padding-left: 2px; border: 1px solid #d4d4d4; border-radius: 1px; background: linear-gradient(#fafafa, #f0f0f0); }
.combo::after { content: ""; position: absolute; right: 3px; top: 3px; border: solid transparent; border-width: 2px 1px 0; border-top-color: #555; }

.toolbar { display: flex; align-items: center; height: 14px; padding-left: 3px; background: linear-gradient(#fafafa, #ededed); border-bottom: 1px solid #e2e2e2; }
.toolbar > * { flex: none; }
.toolbar button { width: 12px; height: 12px; }
.toolbar button svg { width: 9px; height: 9px; }
.toolbar .raised { background: #fcfcfc; border: 1px solid #d6d6d6; }
.gap-s { width: 2px; }
.gap-l { width: 6px; }
.time { width: 12px; }
.time-value { width: 17px; }
.frame { width: 8px; margin-left: 2px; }
.toolbar .frame { padding: 0 1px; }
.spin { width: 5px; height: 8px; border: 1px solid #d4d4d4; background: linear-gradient(#fff 35%, #777 35%, #777 45%, #fff 45%, #fff 55%, #777 55%, #777 65%, #fff 65%); }
.max { width: 17px; margin-left: 1px; white-space: nowrap; }
.array { width: 46px; }
.array svg { width: 6px; height: 6px; margin-right: 2px; }
.component { width: 23px; margin-left: 2px; }
.surface { width: 47px; margin-left: 6px; }

.workspace { flex: 1; min-height: 0; display: grid; grid-template-columns: 93px minmax(0, 1fr) 121px; gap: 3px; border-bottom: 2px solid #dcdcdc; }
.left, .right, .center { min-width: 0; min-height: 0; display: flex; flex-direction: column; }
.dock-title { flex: none; display: flex; align-items: center; justify-content: space-between; height: 6px; font-weight: 400; }
.dock-title span { display: flex; gap: 1px; padding-right: 1px; }
.dock-title svg { width: 4px; height: 4px; }
.pipeline { flex: 1; min-height: 0; display: flex; flex-direction: column; }
.tree { flex: 1; list-style: none; background: #fff; border: 1px solid #dedede; border-left: 0; }
.tree li { display: flex; align-items: center; height: 8px; gap: 3px; }
.tree svg { width: 5px; height: 5px; }
.tree .eye { width: 6px; margin-right: 2px; }
.selected { display: flex; align-items: center; gap: 2px; height: 7px; padding: 0 1px; background: #1676d2; color: #fff; font-weight: 400; }
.tabs { flex: none; display: flex; align-items: flex-end; }
.tabs button { height: 8px; padding: 0 4px; border: 1px solid #d0d0d0; border-bottom: 0; background: #dedede; }
.tabs .active { height: 9px; background: #f6f6f6; }
.dock-tabs { padding-top: 3px; }
.dock-tabs button { width: 30px; }
.dock-tabs .active { width: 26px; }
.properties { flex: none; padding-top: 1px; }
.actions { display: grid; grid-template-columns: 25px 27px 23px 9px; gap: 2px; padding: 3px 2px 0; }
.actions .help { color: #4e8d35; font-weight: 700; font-size: 6px; }
.search { display: flex; gap: 1px; padding: 2px 3px 3px; }
.search input { flex: 1; }
.scroll { display: flex; height: 187px; padding-left: 2px; }
.panel { flex: 1; min-width: 0; overflow: hidden; display: flex; flex-direction: column; gap: 1px; }
.panel > * { flex: none; }
.group-head { display: flex; gap: 2px; }
.group-head .btn:first-child { flex: none; width: 59px; justify-content: flex-start; padding-left: 3px; font-weight: 700; color: #333; }
.group-head i { flex: none; width: 5px; height: 1px; background: #2d6499; }
.group-head .sq { width: 10px; height: 9px; }
.arrays { background: #fff; border: 1px solid #dedede; border-right: 0; }
.arrays label { display: flex; align-items: center; gap: 1px; padding-left: 1px; }
.arrays .head { height: 7px; background: #f1f1f1; border-bottom: 1px solid #e3e3e3; }
.arrays svg { width: 6px; height: 6px; margin: 0 2px 0 1px; }
.short { height: 14px; }
.tall { height: 21px; }
.block-tabs { padding-top: 1px; margin-bottom: -1px; }
.blocks { display: flex; flex-direction: column; height: 67px; }
.blocks label { flex: 1; min-height: 0; }
.blocks .head { flex: none; }
.wide { display: flex; gap: 3px; padding-top: 1px; }
.check-btn { flex: none; width: 50px; }
.uncheck-btn { flex: none; width: 29px; border-right: 0; }
.stride { padding: 0; align-items: center; }
.stride label { width: 9px; }
.stride input { flex: none; width: 29px; }
.repr { align-items: center; padding: 0; gap: 5px; }
.repr select { flex: none; width: 60px; height: 8px; padding-left: 2px; border: 1px solid #d4d4d4; background: #f5f5f5; }
.panel h3 { line-height: 8px; color: #333; }
.vbar { flex: none; width: 5px; margin-right: 4px; background: #dcdcdc; }
.vbar i { display: block; height: 97px; background: #f7f7f7; border: 1px solid #e2e2e2; }
.hbar { height: 7px; margin: 1px 9px 1px 2px; background: #f7f7f7; border: 1px solid #e2e2e2; }
.hbar i { display: block; width: 17px; height: 5px; margin-left: 60px; background: #d5d5d5; }

.layout-tabs { height: 10px; border-bottom: 1px solid #ddd; }
.layout-tabs button { width: 12px; padding: 0; }
.layout-tabs .active { width: 37px; gap: 2px; }
.layout-tabs svg { width: 5px; height: 5px; }
.viewbar { flex: none; display: flex; align-items: center; height: 8px; padding-right: 1px; }
.viewbar button { flex: none; width: 8px; height: 8px; }
.viewbar svg { width: 5px; height: 5px; }
.viewbar i { width: 2px; }
.viewbar strong { margin: 0 4px 0 auto; color: #444; }
.viewbar .raised { background: #f8f8f8; border: 1px solid #ddd; }
.viewport { flex: 1; min-height: 0; display: flex; align-items: center; justify-content: center; padding: 0 45px; border: 2px solid #8988cf; background: #52576e; }
.render { width: 100%; }

.right { padding-right: 1px; }
.editor { display: flex; flex-direction: column; gap: 1px; padding: 3px 2px 0; }
.row { display: flex; align-items: center; height: 8px; gap: 3px; }
.find { gap: 1px; }
.find input, .data input { flex: 1; }
.off { color: #a0a0a0; }
.editor h3 { height: 7px; line-height: 6px; color: #333; border-bottom: 1px solid #ddd; }
.field { display: grid; grid-template-columns: 32px minmax(0, 1fr) 40px; }
.field .combo { grid-column: 2 / 4; height: 8px; }
.field.two { line-height: 4px; height: 9px; }
.mapping { display: flex; gap: 2px; }
.plots { flex: 1; min-width: 0; display: flex; flex-direction: column; gap: 3px; }
.curve { width: 100%; height: 66px; background: #fff; }
.ramp { width: 100%; height: 8px; background: #fff; }
.side { display: flex; flex-direction: column; gap: 1px; }
.nan { justify-content: flex-start; height: 8px; gap: 1px; }
.nan i { width: 6px; height: 6px; border-radius: 50%; background: #f3ed19; border: 1px solid #b9b43c; }
.footer { display: flex; gap: 2px; padding-top: 3px; }
.footer .views { height: 8px; width: 35px; margin-left: auto; }
.footer .pressed { background: #d8d8d8; }
```
